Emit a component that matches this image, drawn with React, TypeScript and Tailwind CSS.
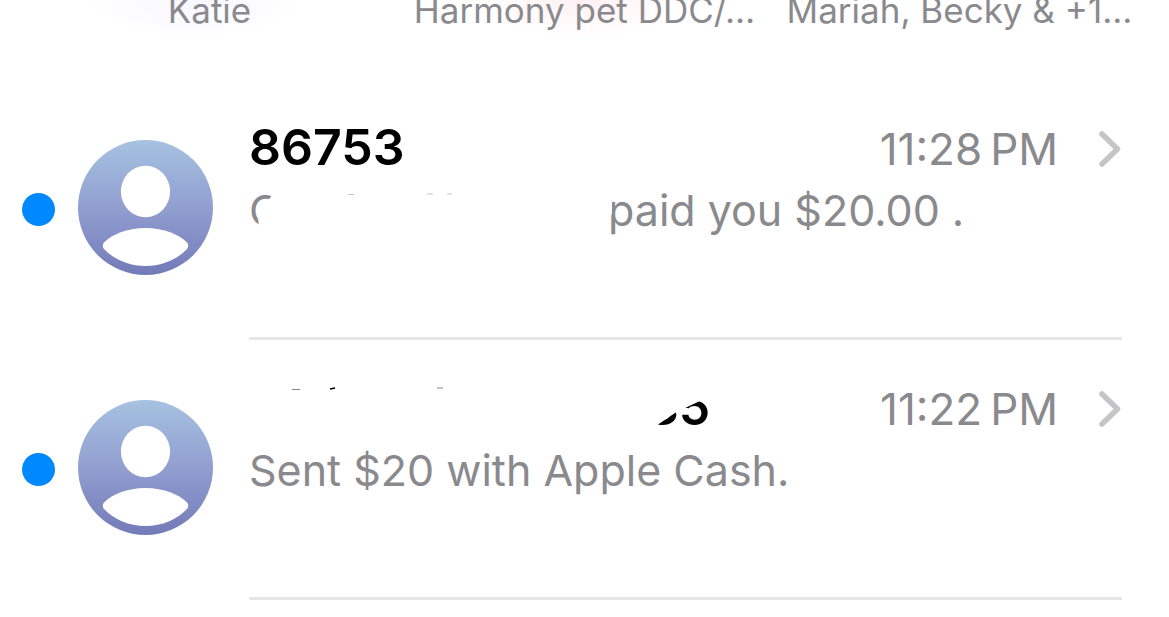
import type { ReactNode } from "react";

type PinnedChat = { name: string; glow: string };

const pinned: PinnedChat[] = [
  { name: "Katie", glow: "bg-[radial-gradient(ellipse_110px_38px_at_46%_0,#f7f7ff,transparent)]" },
  { name: "Harmony pet DDC/...", glow: "bg-[radial-gradient(ellipse_100px_38px_at_50%_0,#fff0f3,transparent)]" },
  { name: "Mariah, Becky & +1...", glow: "" },
];

function Avatar() {
  return (
    <svg viewBox="0 0 135 135" className="mt-15 size-[135px] shrink-0" aria-hidden="true">
      <defs>
        <linearGradient id="avatar-fill" x1="0" y1="0" x2="0" y2="1">
          <stop offset="0" stopColor="#a6c2e1" />
          <stop offset="0.5" stopColor="#919fd0" />
          <stop offset="1" stopColor="#737ab8" />
        </linearGradient>
      </defs>
      <circle cx="67.5" cy="67.5" r="67.5" fill="url(#avatar-fill)" />
      <ellipse cx="67.5" cy="51.5" rx="24.6" ry="25.7" fill="#fff" />
      <path
        d="M26 102.500C34 94.500 49 88 67.500 88S101 94.500 109 102.500Q111.500 105.500 109 109C99 119.500 84 126 67.500 126S36 119.500 26 109Q23.500 105.500 26 102.500Z"
        fill="#fff"
      />
    </svg>
  );
}

function Chevron() {
  return (
    <svg viewBox="0 0 24 36" className="h-9 w-6 shrink-0" aria-hidden="true">
      <path d="M4 3L19.500 18L4 33" fill="none" stroke="#c5c5c7" strokeWidth="5.500" strokeLinecap="round" strokeLinejoin="round" />
    </svg>
  );
}

function Conversation({ title, time, children }: { title: ReactNode; time: string; children: ReactNode }) {
  return (
    <li>
      <a href="#conversation" className="flex h-[260px] items-start pr-[47px] pl-[22px]">
        <span className="mt-[113px] mr-[23px] size-[33px] shrink-0 rounded-full bg-[#0088ff]" />
        <Avatar />
        <div className="ml-9 h-full min-w-0 flex-1 border-b-3 border-[#e5e5ea] pt-[38px]">
          <div className="flex h-[62px] items-center">
            <h2 className="relative flex-1 self-start text-[50px] leading-[58px] font-semibold text-black">{title}</h2>
            <time className="mr-10 text-[44px] leading-[62px] whitespace-pre text-[#8a8a8e]">{time}</time>
            <Chevron />
          </div>
          <p className="relative flex text-[43px] leading-[60px] whitespace-pre text-[#8a8a8e]">{children}</p>
        </div>
      </a>
    </li>
  );
}

export default function App() {
  return (
    <main className="min-h-screen overflow-hidden bg-white font-['Inter',sans-serif]">
      <header className="grid h-20 grid-cols-3 px-[22px]">
        {pinned.map((chat) => (
          <div key={chat.name} className={chat.glow}>
            <p className="-mt-3 text-center text-[35px] leading-[44px] whitespace-nowrap text-[#8a8a8e]">{chat.name}</p>
          </div>
        ))}
      </header>
      <ul>
        <Conversation title="86753" time={"11:28\u2009PM"}>
          <span className="w-[359px]">
            <span className="inline-block [clip-path:polygon(0_0,22px_0,22px_17px,13px_26px,9px_35px,10px_50px,0_50px)]">C</span>
          </span>
          <svg viewBox="0 0 240 4" className="absolute top-[13px] left-0 h-1 w-60" aria-hidden="true">
            <path d="M99 1.500H105M178 1H184M198 1H203" fill="none" stroke="#c4c4c6" strokeWidth="1" />
          </svg>
          <span className="[clip-path:polygon(4px_0,100%_0,100%_100%,0_100%,0_43px,4px_33px)]">paid you $20.00 .</span>
        </Conversation>
        <Conversation
          title={
            <>
              <svg viewBox="0 0 200 4" className="absolute top-[8px] left-0 h-1 w-[200px]" aria-hidden="true">
                <path d="M43 3.500H51M188 2H194" fill="none" stroke="#888" strokeWidth="1" />
                <path d="M81 3L86 2" fill="none" stroke="#000" strokeWidth="1.500" />
              </svg>
              <span className="ml-[398px] inline-block [clip-path:polygon(0_54px,28px_35px,36px_31px,57px_21px,75px_21px,75px_58px,0_58px)]">
                35
              </span>
            </>
          }
          time={"11:22\u2009PM"}
        >
          Sent $20 with Apple Cash.
        </Conversation>
      </ul>
    </main>
  );
}
